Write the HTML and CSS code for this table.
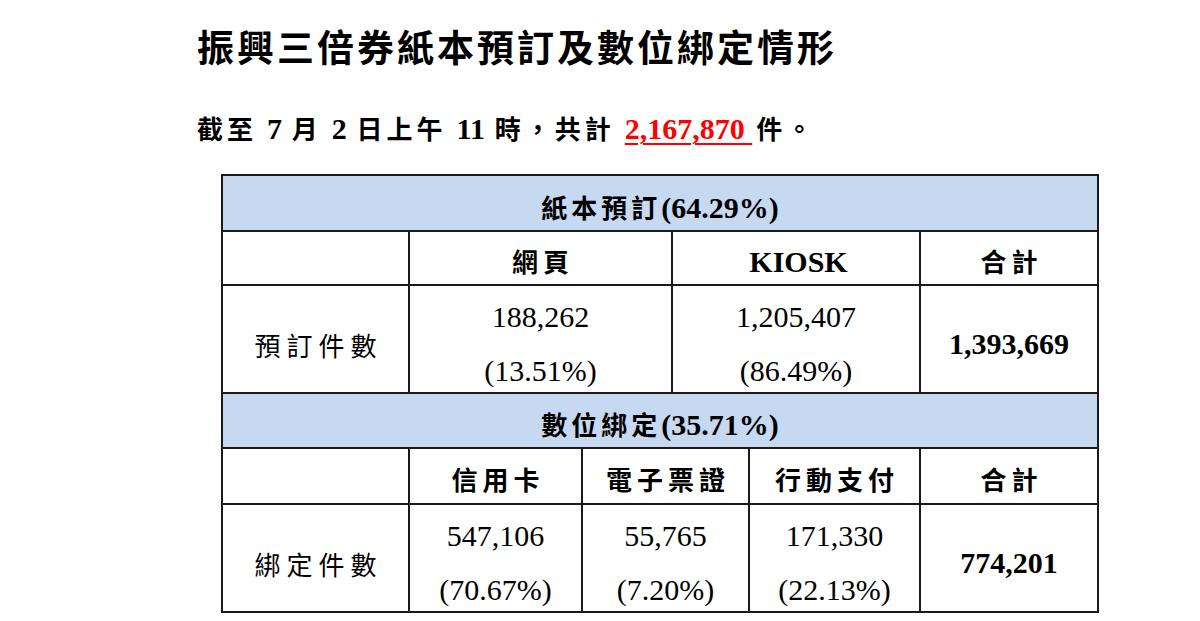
FILE: index.html
```html
<!DOCTYPE html>
<html lang="zh-Hant">
<head>
<meta charset="utf-8">
<title>振興三倍券紙本預訂及數位綁定情形</title>
<link rel="stylesheet" href="styles.css">
</head>
<body>
<main class="page">
  <h1 class="title">振興三倍券紙本預訂及數位綁定情形</h1>
  <p class="summary">截至 <span class="num">7</span> 月 <span class="num">2</span> 日上午 <span class="num">11</span> 時，共計 <span class="total num">2,167,870&nbsp;</span>件。</p>
  <table class="stats">
    <colgroup>
      <col class="c1"><col class="c2"><col class="c3"><col class="c4"><col class="c5"><col class="c6">
    </colgroup>
    <tr class="r-sec">
      <td colspan="6" class="sec">紙本預訂<span class="num">(64.29%)</span></td>
    </tr>
    <tr class="r-head">
      <td></td>
      <td colspan="2" class="head">網頁</td>
      <td colspan="2" class="head"><span class="num">KIOSK</span></td>
      <td class="head">合計</td>
    </tr>
    <tr class="r-data">
      <td class="label">預訂件數</td>
      <td colspan="2" class="val"><span class="line">188,262</span><span class="line">(13.51%)</span></td>
      <td colspan="2" class="val"><span class="line">1,205,407</span><span class="line">(86.49%)</span></td>
      <td class="sum">1,393,669</td>
    </tr>
    <tr class="r-sec r-sec2">
      <td colspan="6" class="sec">數位綁定<span class="num">(35.71%)</span></td>
    </tr>
    <tr class="r-head r-head2">
      <td></td>
      <td class="head">信用卡</td>
      <td colspan="2" class="head">電子票證</td>
      <td class="head">行動支付</td>
      <td class="head">合計</td>
    </tr>
    <tr class="r-data">
      <td class="label">綁定件數</td>
      <td class="val"><span class="line">547,106</span><span class="line">(70.67%)</span></td>
      <td colspan="2" class="val"><span class="line">55,765</span><span class="line">(7.20%)</span></td>
      <td class="val"><span class="line">171,330</span><span class="line">(22.13%)</span></td>
      <td class="sum">774,201</td>
    </tr>
  </table>
</main>
</body>
</html>
```
FILE: styles.css
```css
html, body {
  margin: 0;
  padding: 0;
  background: #ffffff;
}
body {
  font-family: "Noto Sans CJK TC", "Liberation Serif", serif;
  color: #000;
}
.page {
  padding: 0 0 0 197px;
}
.num {
  font-family: "Liberation Serif", "Noto Sans CJK TC", serif;
  letter-spacing: 0;
}
.title {
  margin: 23px 0 0;
  font-size: 37px;
  line-height: 46px;
  font-weight: 700;
  letter-spacing: 3px;
}
.summary {
  margin: 39px 0 0;
  font-size: 26px;
  line-height: 40px;
  font-weight: 700;
  letter-spacing: 4px;
}
.summary .num {
  font-size: 30px;
}
.total {
  color: #ff0000;
  text-decoration: underline;
  text-decoration-thickness: 2px;
  text-underline-offset: 4px;
  margin-right: 4px;
}
.stats {
  margin: 25px 0 0 24px;
  border-collapse: collapse;
  table-layout: fixed;
  width: 877px;
  border: 2px solid #1a1a1a;
}
.c1 { width: 187px; }
.c2 { width: 173px; }
.c3 { width: 90px; }
.c4 { width: 77px; }
.c5 { width: 171px; }
.c6 { width: 178px; }
.stats td {
  border: 2px solid #1a1a1a;
  padding: 0;
  text-align: center;
  vertical-align: middle;
}
.r-sec { height: 56px; }
.r-head { height: 54px; }
.r-sec2 { height: 55px; }
.r-head2 { height: 56px; }
.r-data { height: 108px; }
.sec {
  background: #c6d9f1;
  font-size: 26px;
  font-weight: 700;
  letter-spacing: 4px;
}
.stats td.sec {
  padding-top: 6px;
}
.sec .num {
  font-size: 30px;
}
.head {
  font-size: 26px;
  font-weight: 700;
  letter-spacing: 5px;
}
.stats td.head {
  padding: 4px 0 0 5px;
}
.head .num {
  font-size: 30px;
  letter-spacing: 0;
}
.label {
  font-size: 26px;
  letter-spacing: 6px;
}
.stats td.label {
  padding: 10px 0 0 6px;
}
.val {
  font-family: "Liberation Serif", serif;
  font-size: 30px;
}
.stats td.val {
  vertical-align: top;
  padding-top: 4px;
}
.line {
  display: block;
  line-height: 54px;
}
.line:last-child {
  margin-bottom: -16px;
}
.sum {
  font-family: "Liberation Serif", serif;
  font-size: 30px;
  font-weight: 700;
}
.stats td.sum {
  padding-top: 10px;
}
```
